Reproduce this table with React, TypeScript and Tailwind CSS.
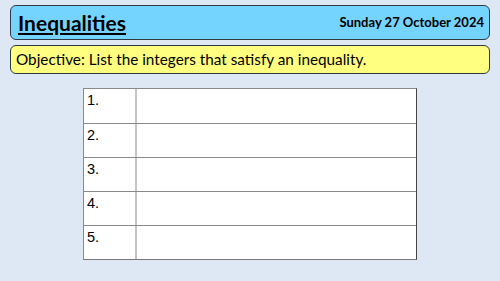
const ROWS = ['1.', '2.', '3.', '4.', '5.'];

export default function App() {
  return (
    <div className="h-[281px] w-[500px] overflow-hidden bg-[#dde8f4] pt-[5px] font-['Lato','Liberation_Sans',sans-serif]">
      <div className="mx-[10px] flex h-[35px] items-center justify-between rounded-[6px] border-[1.5px] border-[#2f3a44] bg-[#75d4fd] pl-[7px] pr-[5px]">
        <h1 className="text-[21px] font-bold leading-none text-black underline decoration-2 underline-offset-2">
          Inequalities
        </h1>
        <span className="text-[13px] font-bold text-black">Sunday 27 October 2024</span>
      </div>

      <div className="mx-[10px] mt-[5px] flex h-[29px] items-center rounded-[6px] border-[1.5px] border-[#2f3a44] bg-[#ffff80] pl-[5px]">
        <p className="text-[15.3px] text-black">Objective: List the integers that satisfy an inequality.</p>
      </div>

      <div className="ml-[83px] mt-[14px] w-[334px] border border-l-[#8a8a8a] border-t-[#8a8a8a] border-b-[#7a7a7a] border-r-[#444] bg-white">
        {ROWS.map((n, i) => (
          <div
            key={n}
            className={`flex h-[34px] ${i > 0 ? 'border-t border-[#8a8a8a]' : ''}`}
          >
            <div className="w-[53px] border-r-2 border-[#c4c4c4] pl-[3px] pt-[3px] font-['Liberation_Sans',sans-serif] text-[14.5px] leading-[17px] text-black">
              {n}
            </div>
            <div className="flex-1" />
          </div>
        ))}
      </div>
    </div>
  );
}
